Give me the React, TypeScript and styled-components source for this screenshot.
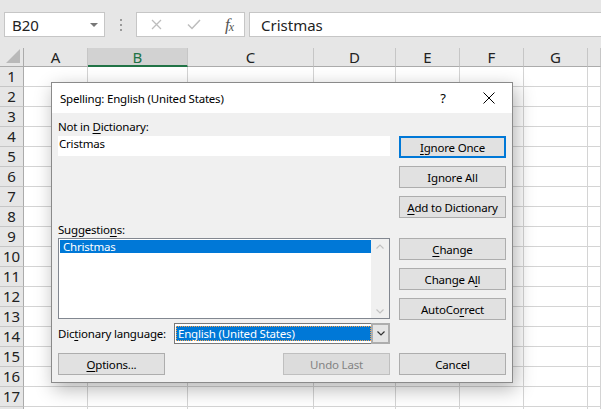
import React from 'react';
import styled, { createGlobalStyle } from 'styled-components';

const UI = '"Noto Sans", "Segoe UI", sans-serif';

const Global = createGlobalStyle`
  html, body { margin: 0; padding: 0; width: 601px; height: 409px; overflow: hidden; background: #fff; }
  body { font-family: ${UI}; }
  * { box-sizing: border-box; }
`;

const Page = styled.div`
  position: relative;
  width: 601px;
  height: 409px;
  overflow: hidden;
  display: flex;
  flex-direction: column;
  background: #fff;
`;

/* ---------- formula bar ---------- */
const FormulaBar = styled.div`
  height: 48px;
  flex: none;
  background: #e6e6e6;
  display: flex;
  align-items: flex-start;
  padding: 12px 0 0 4px;
`;

const NameBox = styled.div`
  width: 101px;
  height: 25px;
  background: #fff;
  border: 1px solid #c6c6c6;
  display: flex;
  align-items: center;
  justify-content: space-between;
  padding: 0 6px 0 7px;
  font-size: 15px;
  color: #222;
`;

const DropTri = styled.span`
  width: 0;
  height: 0;
  border-left: 4px solid transparent;
  border-right: 4px solid transparent;
  border-top: 4px solid #777;
`;

const Dots = styled.div`
  width: 31px;
  height: 25px;
  display: flex;
  flex-direction: column;
  align-items: center;
  justify-content: center;
  gap: 3px;
  & > span { width: 2px; height: 2px; background: #9a9a9a; }
`;

const FxBox = styled.div`
  width: 109px;
  height: 25px;
  background: #fff;
  border: 1px solid #c6c6c6;
  display: flex;
  align-items: center;
  padding-left: 12px;
`;

const FxSlot = styled.div<{ $w: number }>`
  width: ${(p) => p.$w}px;
  display: flex;
  align-items: center;
  justify-content: center;
`;

const FxText = styled.span`
  font-family: "Liberation Serif", serif;
  font-style: italic;
  font-size: 17px;
  color: #555;
  letter-spacing: -1px;
  line-height: 1;
  & > sub { font-size: 12px; vertical-align: -1px; }
`;

const FormulaInput = styled.div`
  flex: 1;
  margin-left: 4px;
  height: 25px;
  background: #fff;
  border: 1px solid #c6c6c6;
  border-right: none;
  display: flex;
  align-items: center;
  padding-left: 11px;
  font-size: 15px;
  color: #222;
`;

/* ---------- sheet ---------- */
const Sheet = styled.div`
  flex: 1;
  display: grid;
  grid-template-columns: 24px 64px 100px 126px 82px 64px 64px 64px 1fr;
  grid-template-rows: 19px;
  grid-auto-rows: 20px;
  font-size: 15px;
`;

const Corner = styled.div`
  background: #e6e6e6;
  border-right: 1px solid #ababab;
  border-bottom: 1px solid #ababab;
  position: relative;
  &::after {
    content: '';
    position: absolute;
    right: 3px;
    bottom: 3px;
    width: 0;
    height: 0;
    border-left: 14px solid transparent;
    border-bottom: 14px solid #b9b9b9;
  }
`;

const ColHead = styled.div<{ $sel?: boolean }>`
  background: ${(p) => (p.$sel ? '#d2d2d2' : '#e6e6e6')};
  color: ${(p) => (p.$sel ? '#217346' : '#222')};
  border-right: 1px solid #c6c6c6;
  border-bottom: ${(p) => (p.$sel ? '2px solid #217346' : '1px solid #ababab')};
  display: flex;
  align-items: center;
  justify-content: center;
  padding-top: ${(p) => (p.$sel ? '1px' : '0')};
  line-height: 1;
`;

const RowHead = styled.div`
  background: #e6e6e6;
  color: #222;
  border-right: 1px solid #ababab;
  border-bottom: 1px solid #c6c6c6;
  display: flex;
  align-items: center;
  justify-content: center;
  line-height: 1;
`;

const Cell = styled.div`
  border-right: 1px solid #d4d4d4;
  border-bottom: 1px solid #d4d4d4;
`;

/* ---------- dialog ---------- */
const Dialog = styled.div`
  position: absolute;
  left: 51px;
  top: 82px;
  width: 462px;
  height: 301px;
  border: 1px solid #8a8a8a;
  background: #f0f0f0;
  box-shadow: 3px 6px 18px rgba(0, 0, 0, 0.3);
  display: flex;
  flex-direction: column;
  font-family: ${UI};
  font-size: 11.5px;
  letter-spacing: -0.2px;
  color: #000;
`;

const TitleBar = styled.div`
  height: 30px;
  flex: none;
  background: #fff;
  display: flex;
  align-items: center;
  padding-left: 8px;
`;

const TitleText = styled.div`
  flex: 1;
  color: #000;
`;

const TitleBtn = styled.div`
  width: 46px;
  height: 30px;
  display: flex;
  align-items: center;
  justify-content: center;
  font-size: 13px;
  color: #000;
`;

const Body = styled.div`
  flex: 1;
  display: flex;
  gap: 9px;
  padding: 6px 6px 7px 6px;
`;

const LeftCol = styled.div`
  width: 332px;
  display: flex;
  flex-direction: column;
`;

const RightCol = styled.div`
  width: 107px;
  display: flex;
  flex-direction: column;
  padding-top: 17px;
`;

const Label = styled.div`
  height: 16px;
  line-height: 16px;
  white-space: nowrap;
`;

const TextBox = styled.div`
  margin-top: 1px;
  height: 20px;
  background: #fff;
  padding-left: 1px;
  line-height: 15px;
`;

const Spacer = styled.div`
  flex: 1;
`;

const ListBox = styled.div`
  height: 81px;
  background: #fff;
  border: 1px solid #828790;
  display: flex;
  padding: 1px 0 0 1px;
`;

const ListItems = styled.div`
  flex: 1;
`;

const ListItem = styled.div<{ $sel?: boolean }>`
  height: 13px;
  line-height: 13px;
  padding-left: 3px;
  background: ${(p) => (p.$sel ? '#0078d7' : 'transparent')};
  color: ${(p) => (p.$sel ? '#fff' : '#000')};
`;

const ScrollBar = styled.div`
  width: 18px;
  margin-top: -1px;
  background: #f0f0f0;
  display: flex;
  flex-direction: column;
  justify-content: space-between;
  align-items: center;
  padding: 5px 0 4px;
`;

const ComboRow = styled.div`
  margin-top: 4px;
  height: 21px;
  display: flex;
  align-items: center;
`;

const ComboLabel = styled.div`
  width: 116px;
  white-space: nowrap;
`;

const Combo = styled.div`
  flex: 1;
  height: 21px;
  background: #fff;
  border: 1px solid #7a7a7a;
  border-right: none;
  display: flex;
`;

const ComboValue = styled.div`
  flex: 1;
  margin: 2px 0 2px 1px;
  background: #0078d7;
  color: #fff;
  outline: 1px dotted #f7a24a;
  outline-offset: -1px;
  line-height: 15px;
  padding-left: 2px;
`;

const ComboBtn = styled.div`
  width: 19px;
  margin-top: -1px;
  margin-bottom: -1px;
  background: #e5e5e5;
  border: 2px solid #adadad;
  display: flex;
  align-items: center;
  justify-content: center;
`;

const BottomRow = styled.div`
  margin-top: 9px;
  display: flex;
  justify-content: space-between;
`;

const Button = styled.div<{ $default?: boolean; $disabled?: boolean; $gap?: number; $w?: number }>`
  width: ${(p) => (p.$w ? `${p.$w}px` : '100%')};
  height: 22px;
  margin-top: ${(p) => (p.$gap !== undefined ? `${p.$gap}px` : '0')};
  background: ${(p) => (p.$disabled ? '#dcdcdc' : '#e1e1e1')};
  border: ${(p) => (p.$default ? '2px solid #0078d7' : p.$disabled ? '1px solid #bfbfbf' : '1px solid #adadad')};
  color: ${(p) => (p.$disabled ? '#838383' : '#000')};
  display: flex;
  align-items: center;
  justify-content: center;
  white-space: nowrap;
`;

const CancelButton = styled(Button)`
  margin-top: auto;
`;

const U = styled.span`
  text-decoration: underline;
  text-underline-offset: 2px;
`;

const Chevron = ({ up, color, w = 8 }: { up?: boolean; color: string; w?: number }) => (
  <svg width={w} height={5} viewBox="0 0 8 5">
    <path d={up ? 'M0.5 4.5 L4 1 L7.5 4.5' : 'M0.5 0.5 L4 4 L7.5 0.5'} fill="none" stroke={color} strokeWidth="1.2" />
  </svg>
);

const cols = ['A', 'B', 'C', 'D', 'E', 'F', 'G', ''];

export default function App() {
  const rows = Array.from({ length: 18 }, (_, i) => i + 1);
  return (
    <Page>
      <Global />
      <FormulaBar>
        <NameBox>
          <span>B20</span>
          <DropTri />
        </NameBox>
        <Dots>
          <span />
          <span />
          <span />
        </Dots>
        <FxBox>
          <FxSlot $w={14}>
            <svg width="11" height="11" viewBox="0 0 11 11">
              <path d="M1 1 L10 10 M10 1 L1 10" stroke="#bdbdbd" strokeWidth="1.3" fill="none" />
            </svg>
          </FxSlot>
          <FxSlot $w={62}>
            <svg width="14" height="11" viewBox="0 0 14 11">
              <path d="M1 5.5 L5 9.5 L13 1" stroke="#bdbdbd" strokeWidth="1.5" fill="none" />
            </svg>
          </FxSlot>
          <FxSlot $w={8}>
            <FxText>
              f<sub>x</sub>
            </FxText>
          </FxSlot>
        </FxBox>
        <FormulaInput>Cristmas</FormulaInput>
      </FormulaBar>
      <Sheet>
        <Corner />
        {cols.map((c, i) => (
          <ColHead key={i} $sel={c === 'B'}>
            {c}
          </ColHead>
        ))}
        {rows.map((r) => (
          <React.Fragment key={r}>
            <RowHead>{r <= 17 ? r : ''}</RowHead>
            {cols.map((_, i) => (
              <Cell key={i} />
            ))}
          </React.Fragment>
        ))}
      </Sheet>

      <Dialog>
        <TitleBar>
          <TitleText>Spelling: English (United States)</TitleText>
          <TitleBtn>?</TitleBtn>
          <TitleBtn>
            <svg width="12" height="12" viewBox="0 0 12 12">
              <path d="M0.5 0.5 L11.5 11.5 M11.5 0.5 L0.5 11.5" stroke="#000" strokeWidth="1" fill="none" />
            </svg>
          </TitleBtn>
        </TitleBar>
        <Body>
          <LeftCol>
            <Label>
              Not in <U>D</U>ictionary:
            </Label>
            <TextBox>Cristmas</TextBox>
            <Spacer />
            <Label>
              Suggestio<U>n</U>s:
            </Label>
            <ListBox>
              <ListItems>
                <ListItem $sel>Christmas</ListItem>
              </ListItems>
              <ScrollBar>
                <Chevron up color="#c2c2c2" />
                <Chevron color="#c2c2c2" />
              </ScrollBar>
            </ListBox>
            <ComboRow>
              <ComboLabel>
                Dic<U>t</U>ionary language:
              </ComboLabel>
              <Combo>
                <ComboValue>English (United States)</ComboValue>
                <ComboBtn>
                  <Chevron color="#333" />
                </ComboBtn>
              </Combo>
            </ComboRow>
            <BottomRow>
              <Button $w={107}>
                <U>O</U>ptions...
              </Button>
              <Button $w={107} $disabled>
                Undo Last
              </Button>
            </BottomRow>
          </LeftCol>
          <RightCol>
            <Button $default>
              <U>I</U>gnore Once
            </Button>
            <Button $gap={8}>
              I<U>g</U>nore All
            </Button>
            <Button $gap={8}>
              <U>A</U>dd to Dictionary
            </Button>
            <Button $gap={20}>
              <U>C</U>hange
            </Button>
            <Button $gap={8}>
              Change A<U>l</U>l
            </Button>
            <Button $gap={8}>
              AutoCo<U>r</U>rect
            </Button>
            <CancelButton>Cancel</CancelButton>
          </RightCol>
        </Body>
      </Dialog>
    </Page>
  );
}
